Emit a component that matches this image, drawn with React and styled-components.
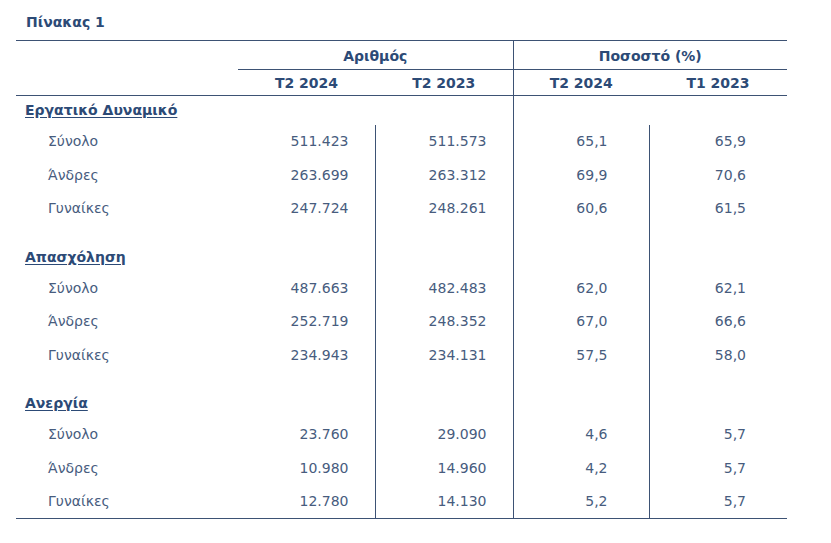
import styled, { createGlobalStyle } from 'styled-components';

const GlobalStyle = createGlobalStyle`
  body {
    margin: 0;
    background: #ffffff;
    font-family: 'DejaVu Sans', Verdana, sans-serif;
  }
`;

const sections = [
  {
    title: 'Εργατικό Δυναμικό',
    rows: [
      ['Σύνολο', '511.423', '511.573', '65,1', '65,9'],
      ['Άνδρες', '263.699', '263.312', '69,9', '70,6'],
      ['Γυναίκες', '247.724', '248.261', '60,6', '61,5'],
    ],
  },
  {
    title: 'Απασχόληση',
    rows: [
      ['Σύνολο', '487.663', '482.483', '62,0', '62,1'],
      ['Άνδρες', '252.719', '248.352', '67,0', '66,6'],
      ['Γυναίκες', '234.943', '234.131', '57,5', '58,0'],
    ],
  },
  {
    title: 'Ανεργία',
    rows: [
      ['Σύνολο', '23.760', '29.090', '4,6', '5,7'],
      ['Άνδρες', '10.980', '14.960', '4,2', '5,7'],
      ['Γυναίκες', '12.780', '14.130', '5,2', '5,7'],
    ],
  },
];

const line = '#3d5274';

export default function App() {
  return (
    <Page>
      <GlobalStyle />
      <Title>Πίνακας 1</Title>
      <Table>
        <colgroup>
          <col style={{ width: 222 }} />
          <col style={{ width: 137 }} />
          <col style={{ width: 138 }} />
          <col style={{ width: 136 }} />
          <col style={{ width: 138 }} />
        </colgroup>
        <thead>
          <GroupRow>
            <th />
            <GroupCell colSpan={2}>Αριθμός</GroupCell>
            <GroupCell colSpan={2} $divider>
              Ποσοστό (%)
            </GroupCell>
          </GroupRow>
          <SubRow>
            <th />
            <SubCell>T2 2024</SubCell>
            <SubCell>T2 2023</SubCell>
            <SubCell $divider>T2 2024</SubCell>
            <SubCell>T1 2023</SubCell>
          </SubRow>
        </thead>
        <tbody>
          {sections.map((section, i) => (
            <Section key={section.title} section={section} first={i === 0} />
          ))}
        </tbody>
      </Table>
    </Page>
  );
}

function Section({ section, first }) {
  return (
    <>
      {!first && (
        <SpacerRow>
          <td />
          <Cell />
          <Cell $divider />
          <Cell $divider />
          <Cell $divider />
        </SpacerRow>
      )}
      <SectionRow>
        <SectionTitle>
          <span>{section.title}</span>
        </SectionTitle>
        <Cell />
        <Cell $divider={!first} />
        <Cell $divider />
        <Cell $divider={!first} />
      </SectionRow>
      {section.rows.map(([label, a, b, c, d]) => (
        <DataRow key={label}>
          <Label>{label}</Label>
          <Cell>{a}</Cell>
          <Cell $divider>{b}</Cell>
          <Cell $divider $wide>
            {c}
          </Cell>
          <Cell $divider $wide>
            {d}
          </Cell>
        </DataRow>
      ))}
    </>
  );
}

const Page = styled.main`
  width: 771px;
  padding: 0 0 0 16px;
  color: #475c7e;
`;

const Title = styled.h1`
  margin: 0;
  height: 40px;
  padding: 14px 0 0 10px;
  box-sizing: border-box;
  font-size: 14px;
  font-weight: bold;
  color: #2c4a76;
`;

const Table = styled.table`
  width: 771px;
  table-layout: fixed;
  border-collapse: collapse;
  border-top: 1px solid ${line};
  border-bottom: 1px solid ${line};
  font-size: 14px;

  th,
  td {
    padding: 0;
  }
`;

const GroupRow = styled.tr`
  height: 29px;
`;

const GroupCell = styled.th`
  text-align: center;
  font-weight: bold;
  color: #2c4a76;
  border-bottom: 1px solid ${line};
  border-left: ${(p) => (p.$divider ? `1px solid ${line}` : 'none')};
  padding-top: 2px !important;
`;

const SubRow = styled.tr`
  height: 26px;
  border-bottom: 1px solid ${line};
`;

const SubCell = styled.th`
  text-align: center;
  font-weight: bold;
  color: #2c4a76;
  border-left: ${(p) => (p.$divider ? `1px solid ${line}` : 'none')};
`;

const SectionRow = styled.tr`
  height: 29px;
`;

const SpacerRow = styled.tr`
  height: 17px;
`;

const DataRow = styled.tr`
  height: 33.5px;
`;

const SectionTitle = styled.td`
  padding-left: 9px !important;
  span {
    font-weight: bold;
    color: #2c4a76;
    text-decoration: underline;
    text-underline-offset: 2px;
  }
`;

const Label = styled.td`
  padding-left: 32px !important;
`;

const Cell = styled.td`
  text-align: right;
  padding-right: ${(p) => (p.$wide ? '41px' : '26px')} !important;
  border-left: ${(p) => (p.$divider ? `1px solid ${line}` : 'none')};
`;
